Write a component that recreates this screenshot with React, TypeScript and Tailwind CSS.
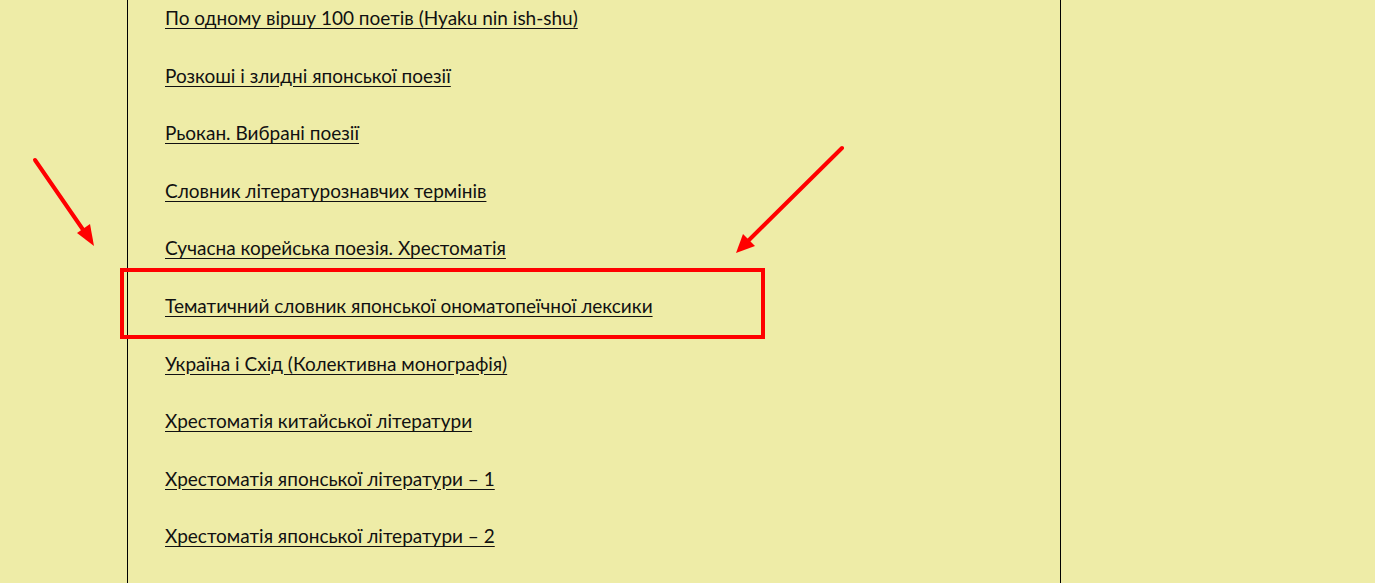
import React from "react";

const books = [
  "По одному віршу 100 поетів (Hyaku nin ish-shu)",
  "Розкоші і злидні японської поезії",
  "Рьокан. Вибрані поезії",
  "Словник літературознавчих термінів",
  "Сучасна корейська поезія. Хрестоматія",
  "Тематичний словник японської ономатопеїчної лексики",
  "Україна і Схід (Колективна монографія)",
  "Хрестоматія китайської літератури",
  "Хрестоматія японської літератури – 1",
  "Хрестоматія японської літератури – 2",
];

export default function App() {
  return (
    <div className="relative h-[583px] w-full overflow-hidden bg-[#eeeca7] font-['Lato','Liberation_Sans',sans-serif] text-[19px] text-[#111]">
      <div className="ml-[127px] h-full w-[934px] border-x border-black pl-[37px] pt-[4px]">
        <ul className="flex flex-col gap-[29.6px]">
          {books.map((b) => (
            <li key={b} className="leading-[28px]">
              <a href="#" className="underline underline-offset-[3px]">
                {b}
              </a>
            </li>
          ))}
        </ul>
      </div>

      {/* annotation: highlight box + arrows */}
      <div className="absolute left-[120px] top-[268px] h-[71px] w-[645px] border-4 border-[#f00]" />
      <svg className="absolute left-0 top-0" width="1375" height="583">
        <line x1="35" y1="160" x2="86" y2="234" stroke="#f00" strokeWidth="4" strokeLinecap="round" />
        <path d="M94,246 L77,233 L90,224 z" fill="#f00" />
        <line x1="842" y1="148" x2="747" y2="242" stroke="#f00" strokeWidth="4" strokeLinecap="round" />
        <path d="M736,253 L743,234 L755,246 z" fill="#f00" />
      </svg>
    </div>
  );
}
